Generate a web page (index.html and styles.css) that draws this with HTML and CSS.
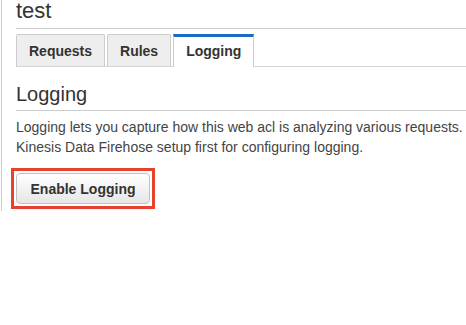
FILE: index.html
```html
<!DOCTYPE html>
<html lang="en">
<head>
    <meta charset="UTF-8">
    <meta name="viewport" content="width=device-width, initial-scale=1.0">
    <title>test - Logging</title>
    <link rel="stylesheet" href="styles.css">
</head>
<body>
    <div class="panel">
        <h1 class="page-title">test</h1>

        <div class="tabs">
            <div class="tab">Requests</div>
            <div class="tab">Rules</div>
            <div class="tab tab-active">Logging</div>
        </div>

        <h2 class="section-title">Logging</h2>

        <p class="section-text">
            Logging lets you capture how this web acl is analyzing various requests. You need an Amazon<br>
            Kinesis Data Firehose setup first for configuring logging.
        </p>

        <div class="highlight">
            <button class="btn">Enable Logging</button>
        </div>
    </div>
</body>
</html>
```

FILE: styles.css
```css
* {
    margin: 0;
    padding: 0;
    box-sizing: border-box;
}

body {
    font-family: 'Liberation Sans', Helvetica, Arial, sans-serif;
    color: #333;
    background: white;
    overflow: hidden;
}

.panel {
    width: 760px;
    margin-left: 1px;
    border-left: 1px solid #cccccc;
    padding: 0 0 2px 14px;
}

.page-title {
    font-size: 22px;
    font-weight: normal;
    line-height: 22px;
    padding-bottom: 6px;
    border-bottom: 1px solid #cccccc;
    color: #333;
}

.tabs {
    display: flex;
    gap: 2px;
    margin-top: 5px;
    border-bottom: 1px solid #d5d5d5;
}

.tab {
    padding: 6px 12px 5px;
    line-height: 20px;
    font-size: 14px;
    font-weight: bold;
    color: #333;
    background: #eeeeee;
    border: 1px solid #cccccc;
    border-bottom: none;
    border-radius: 2px 2px 0 0;
}

.tab-active {
    background: white;
    border-top: 3px solid #1b6ac4;
    padding-top: 4px;
    padding-bottom: 6px;
    margin-bottom: -1px;
    border-radius: 0;
}

.section-title {
    margin-top: 15px;
    font-size: 20px;
    font-weight: normal;
    line-height: 24px;
    padding-bottom: 4px;
    border-bottom: 1px solid #cccccc;
}

.section-text {
    margin-top: 6px;
    font-size: 14px;
    line-height: 20px;
    color: #444;
}

.highlight {
    display: inline-block;
    margin: 11px 0 0 -5px;
    padding: 2px;
    border: 3px solid #e8412e;
}

.btn {
    display: block;
    width: 134px;
    height: 31px;
    font-family: inherit;
    font-size: 14px;
    font-weight: bold;
    color: #333;
    background: linear-gradient(#ffffff, #e6e6e6);
    border: 1px solid #c2c2c2;
    border-radius: 4px;
}
```
